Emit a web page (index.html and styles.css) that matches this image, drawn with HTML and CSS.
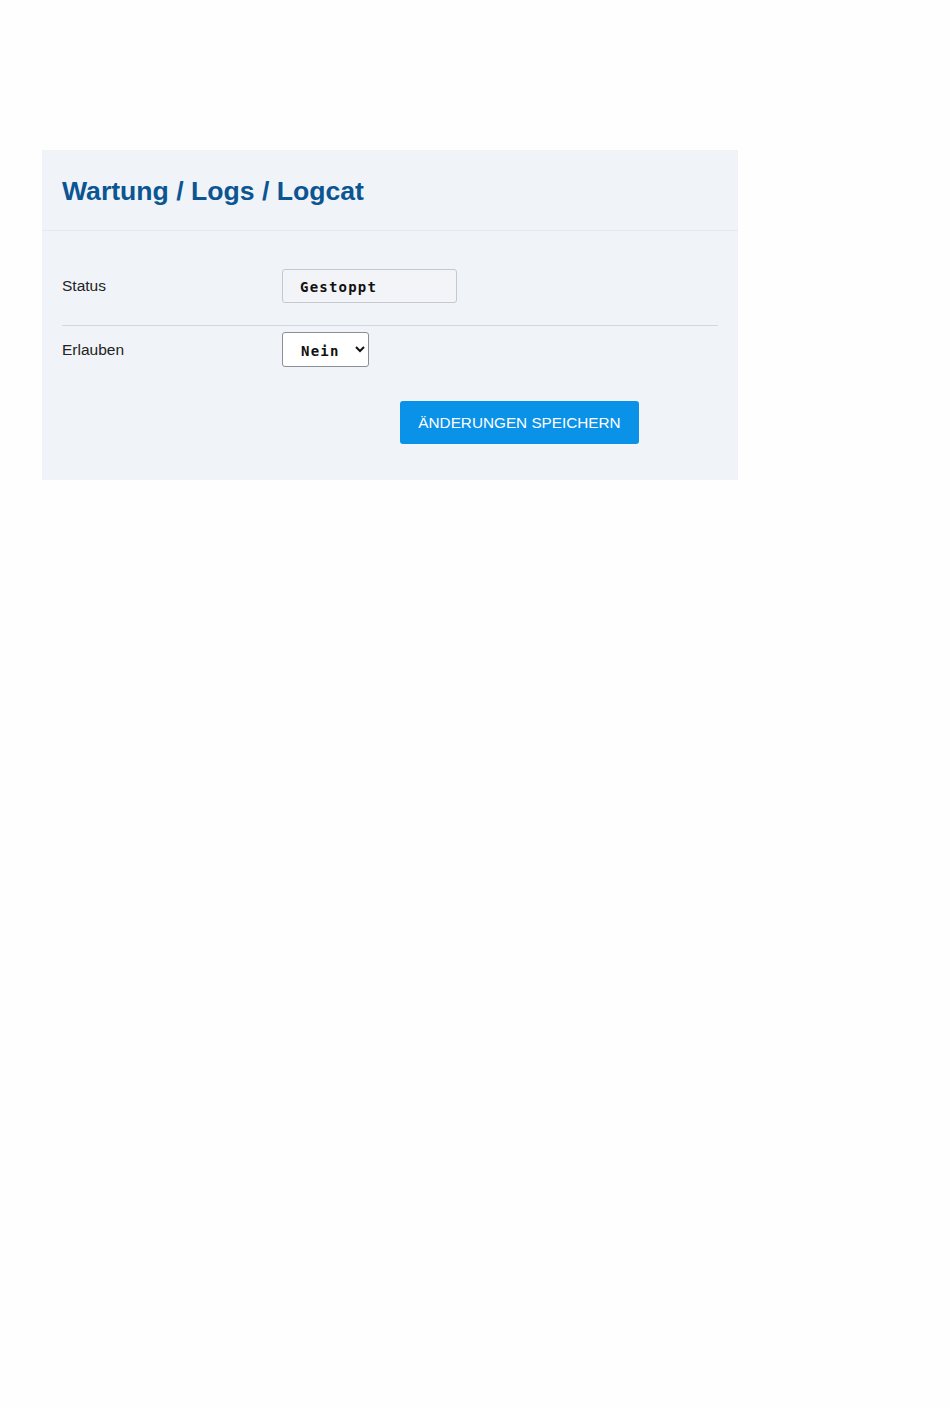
FILE: index.html
```html
<!DOCTYPE html>
<html lang="de">
<head>
    <meta charset="UTF-8">
    <meta name="viewport" content="width=device-width, initial-scale=1.0">
    <title>Logcat</title>
    <link rel="stylesheet" href="styles.css">
</head>
<body>
    <section class="panel">
        <header class="panel-head">
            <h1>Wartung / Logs / Logcat</h1>
        </header>

        <form class="panel-body">
            <div class="row row-status">
                <label class="row-label">Status</label>
                <div class="field-readonly">Gestoppt</div>
            </div>
            <div class="row row-allow">
                <label class="row-label" for="allow">Erlauben</label>
                <select id="allow" class="field-select">
                    <option>Nein</option>
                    <option>Ja</option>
                </select>
            </div>
            <div class="actions">
                <button type="button" class="btn-save">Änderungen speichern</button>
            </div>
        </form>
    </section>
</body>
</html>
```

FILE: styles.css
```css
body {
    margin: 0;
    padding: 0;
    background-color: #fefefe;
    font-family: "Liberation Sans", Arial, sans-serif;
    color: #222;
}

.panel {
    width: 696px;
    margin: 150px 0 0 42px;
    background-color: #f0f4f9;
}

.panel-head {
    height: 80px;
    padding: 0 20px;
    display: flex;
    align-items: center;
    border-bottom: 1px solid #e4e9ef;
}

.panel-head h1 {
    margin: 2px 0 0;
    font-size: 26.6px;
    font-weight: bold;
    color: #0a5592;
}

.panel-body {
    padding: 38px 20px 36px;
}

.row {
    display: flex;
    align-items: center;
}

.row-status {
    padding-bottom: 22px;
    border-bottom: 1px solid #d3d8df;
}

.row-allow {
    padding-top: 6px;
}

.row-label {
    width: 220px;
    font-size: 15.5px;
    color: #222;
}

.field-readonly {
    box-sizing: border-box;
    width: 175px;
    height: 34px;
    padding: 2px 17px 0;
    display: flex;
    align-items: center;
    background-color: #f2f4f7;
    border: 1px solid #c4c9d1;
    border-radius: 3px;
    font-family: "DejaVu Sans Mono", monospace;
    font-weight: bold;
    font-size: 14px;
    letter-spacing: 1.2px;
    color: #111;
}

.field-select {
    box-sizing: border-box;
    width: 87px;
    height: 35px;
    padding: 2px 0 0 14px;
    background-color: #fff;
    border: 1px solid #8a8f96;
    border-radius: 3px;
    font-family: "DejaVu Sans Mono", monospace;
    font-weight: bold;
    font-size: 14px;
    letter-spacing: 1.2px;
    color: #111;
}

.actions {
    padding: 34px 0 0 338px;
}

.btn-save {
    width: 239px;
    height: 43px;
    background-color: #0a91e8;
    color: #fff;
    border: none;
    border-radius: 3px;
    font-family: "Liberation Sans", Arial, sans-serif;
    font-size: 15.3px;
    text-transform: uppercase;
    cursor: pointer;
}
```
